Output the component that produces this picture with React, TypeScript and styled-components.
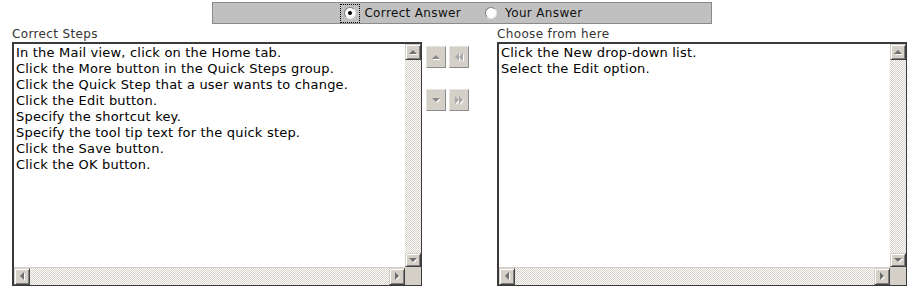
import styled, { createGlobalStyle } from 'styled-components';

const GlobalStyle = createGlobalStyle`
  body {
    margin: 0;
    background: #fff;
    font-family: "DejaVu Sans", Verdana, sans-serif;
    font-size: 12px;
    color: #000;
  }
`;

const Page = styled.div`
  width: 923px;
  height: 288px;
  padding-top: 2px;
  box-sizing: border-box;
`;

const AnswerBar = styled.div`
  width: 500px;
  height: 22px;
  margin: 0 auto;
  box-sizing: border-box;
  border: 1px solid #8a8a8a;
  background: #c0c0c0;
  display: flex;
  align-items: center;
  justify-content: center;
  gap: 20px;
`;

const RadioOption = styled.label`
  display: flex;
  align-items: center;
  gap: 4px;
  color: #111;
  line-height: 16px;
  letter-spacing: 0.35px;
`;

const FocusBox = styled.span<{ $focused: boolean }>`
  display: flex;
  align-items: center;
  justify-content: center;
  width: 20px;
  height: 19px;
  box-sizing: border-box;
  outline: ${({ $focused }) => ($focused ? '1px dotted #000' : 'none')};
  outline-offset: -1px;
`;

const RadioCircle = styled.span<{ $checked: boolean }>`
  width: 12px;
  height: 12px;
  box-sizing: border-box;
  border-radius: 50%;
  border: 1px solid;
  border-color: #808080 #e8e8e8 #e8e8e8 #808080;
  background: #fff;
  display: flex;
  align-items: center;
  justify-content: center;

  &::after {
    content: '';
    width: 4px;
    height: 4px;
    border-radius: 50%;
    background: ${({ $checked }) => ($checked ? '#000' : 'transparent')};
  }
`;

const Columns = styled.div`
  display: flex;
  align-items: flex-start;
  padding-left: 12px;
  margin-top: 2px;
`;

const Column = styled.div`
  display: flex;
  flex-direction: column;
`;

const Caption = styled.div`
  height: 16px;
  line-height: 16px;
  color: #333;
  letter-spacing: 0.35px;
`;

const ListBox = styled.div`
  width: 410px;
  height: 244px;
  box-sizing: border-box;
  border-style: solid;
  border-color: #3a3a3a;
  border-width: 2px 1px 1px 2px;
  background: #fff;
  display: grid;
  grid-template-columns: 1fr 16px;
  grid-template-rows: 1fr 18px;
`;

const ListContent = styled.div`
  padding: 1px 2px;
  font-size: 13px;
  letter-spacing: 0.2px;
  line-height: 16px;
  white-space: nowrap;
  overflow: hidden;
`;

const VScroll = styled.div`
  display: flex;
  flex-direction: column;
`;

const HScroll = styled.div`
  display: flex;
  border-top: 1px solid #d4d0c8;
`;

const Track = styled.div`
  flex: 1;
  background-color: #fff;
  background-image: conic-gradient(#d4d0c8 25%, #fff 0 50%, #d4d0c8 0 75%, #fff 0);
  background-size: 2px 2px;
`;

const Corner = styled.div`
  background: #d4d0c8;
`;

const ScrollButton = styled.div<{ $w: number; $h: number }>`
  width: ${({ $w }) => $w}px;
  height: ${({ $h }) => $h}px;
  box-sizing: border-box;
  background: #d4d0c8;
  border: 1px solid;
  border-color: #d4d0c8 #404040 #404040 #d4d0c8;
  box-shadow: inset 1px 1px #fff, inset -1px -1px #808080;
  display: flex;
  align-items: center;
  justify-content: center;
  flex-shrink: 0;
`;

const MoveButton = styled.div`
  width: 20px;
  height: 22px;
  box-sizing: border-box;
  background: #d4d0c8;
  border: 1px solid;
  border-color: #e6e4de #8c8c8c #8c8c8c #e6e4de;
  display: flex;
  align-items: center;
  justify-content: center;
`;

const MoveGrid = styled.div`
  display: grid;
  grid-template-columns: 20px 20px;
  column-gap: 3px;
  row-gap: 21px;
  margin: 20px 28px 0 4px;
`;

type Dir = 'up' | 'down' | 'left' | 'right';

function Arrow({ dir, color = '#808080', size = 4 }: { dir: Dir; color?: string; size?: number }) {
  const s = size;
  const pts: Record<Dir, string> = {
    up: `0,${s} ${s},0 ${2 * s},${s}`,
    down: `0,0 ${s},${s} ${2 * s},0`,
    left: `${s},0 0,${s} ${s},${2 * s}`,
    right: `0,0 ${s},${s} 0,${2 * s}`,
  };
  const vertical = dir === 'up' || dir === 'down';
  const w = vertical ? 2 * s : s;
  const h = vertical ? s : 2 * s;
  return (
    <svg width={w + 1} height={h + 1} viewBox={`0 0 ${w + 1} ${h + 1}`}>
      <polygon points={pts[dir]} fill="#fff" transform="translate(1,1)" />
      <polygon points={pts[dir]} fill={color} />
    </svg>
  );
}

function DoubleArrow({ dir }: { dir: 'left' | 'right' }) {
  const pts =
    dir === 'left'
      ? ['4,0 0,4 4,8', '8,0 4,4 8,8']
      : ['0,0 4,4 0,8', '4,0 8,4 4,8'];
  return (
    <svg width="9" height="9" viewBox="0 0 9 9">
      {pts.map((p) => (
        <polygon key={p} points={p} fill="#fff" transform="translate(1,1)" />
      ))}
      {pts.map((p) => (
        <polygon key={p + 'c'} points={p} fill="#a8a8a8" />
      ))}
    </svg>
  );
}

function StepList({ items }: { items: string[] }) {
  return (
    <ListBox>
      <ListContent>
        {items.map((t) => (
          <div key={t}>{t}</div>
        ))}
      </ListContent>
      <VScroll>
        <ScrollButton $w={16} $h={16}>
          <Arrow dir="up" color="#6e6e6e" />
        </ScrollButton>
        <Track />
        <ScrollButton $w={16} $h={14}>
          <Arrow dir="down" color="#6e6e6e" />
        </ScrollButton>
      </VScroll>
      <HScroll>
        <ScrollButton $w={16} $h={17}>
          <Arrow dir="left" color="#6e6e6e" />
        </ScrollButton>
        <Track />
        <ScrollButton $w={16} $h={17}>
          <Arrow dir="right" color="#6e6e6e" />
        </ScrollButton>
      </HScroll>
      <Corner />
    </ListBox>
  );
}

const correctSteps = [
  'In the Mail view, click on the Home tab.',
  'Click the More button in the Quick Steps group.',
  'Click the Quick Step that a user wants to change.',
  'Click the Edit button.',
  'Specify the shortcut key.',
  'Specify the tool tip text for the quick step.',
  'Click the Save button.',
  'Click the OK button.',
];

const choices = ['Click the New drop-down list.', 'Select the Edit option.'];

export default function App() {
  return (
    <Page>
      <GlobalStyle />
      <AnswerBar>
        <RadioOption>
          <FocusBox $focused>
            <RadioCircle $checked />
          </FocusBox>
          Correct Answer
        </RadioOption>
        <RadioOption>
          <FocusBox $focused={false}>
            <RadioCircle $checked={false} />
          </FocusBox>
          Your Answer
        </RadioOption>
      </AnswerBar>
      <Columns>
        <Column>
          <Caption>Correct Steps</Caption>
          <StepList items={correctSteps} />
        </Column>
        <MoveGrid>
          <MoveButton>
            <Arrow dir="up" color="#8a8a8a" />
          </MoveButton>
          <MoveButton>
            <DoubleArrow dir="left" />
          </MoveButton>
          <MoveButton>
            <Arrow dir="down" color="#8a8a8a" />
          </MoveButton>
          <MoveButton>
            <DoubleArrow dir="right" />
          </MoveButton>
        </MoveGrid>
        <Column>
          <Caption>Choose from here</Caption>
          <StepList items={choices} />
        </Column>
      </Columns>
    </Page>
  );
}
